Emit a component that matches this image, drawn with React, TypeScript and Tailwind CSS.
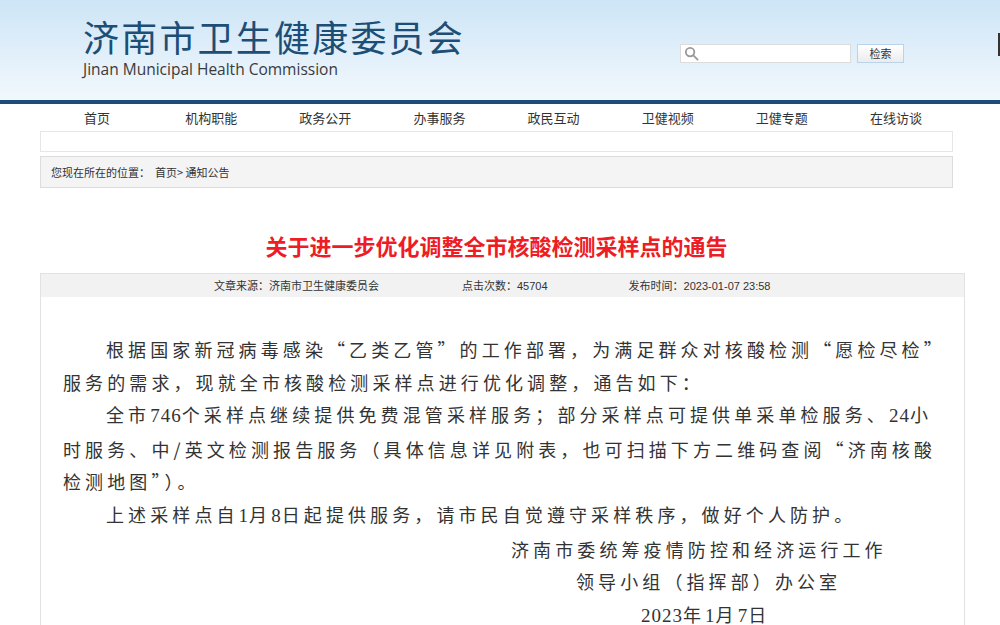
import React from "react";

const navItems = ["首页", "机构职能", "政务公开", "办事服务", "政民互动", "卫健视频", "卫健专题", "在线访谈"];

const cjk = { fontFamily: '"Noto Sans CJK SC", "Liberation Sans", sans-serif' };
const body = { fontFamily: '"Noto Sans CJK SC", "Liberation Serif", serif' };

function Num({ children }: { children: React.ReactNode }) {
  return (
    <span style={{ fontFamily: '"Liberation Serif", serif' }} className="text-[19px] tracking-[1px]">
      {children}
    </span>
  );
}

export default function App() {
  return (
    <div className="relative min-h-[625px] w-[1000px] overflow-hidden bg-white text-[#333]" style={cjk}>
      {/* header */}
      <div className="h-[104px] border-b-4 border-[#1b4d78] bg-gradient-to-b from-[#cde5f6] to-[#f2f8fd]">
        <div className="flex items-start justify-between pl-[83px] pr-[96px] pt-[16px]">
          <div>
            <div className="text-[36px] leading-[40px] tracking-[2.2px] text-[#1c4e76]">济南市卫生健康委员会</div>
            <div
              className="mt-[3px] text-[15.5px] leading-[20px] text-[#3a3a3a]"
              style={{ fontFamily: '"Open Sans", "Liberation Sans", sans-serif' }}
            >
              Jinan Municipal Health Commission
            </div>
          </div>
          <div className="mt-[28px] flex items-center gap-[6px]">
            <div className="flex h-[19px] w-[171px] items-center border border-[#dcdcdc] bg-white pl-[3px]">
              <svg width="15" height="15" viewBox="0 0 16 16" fill="none" stroke="#9a9a9a" strokeWidth="2">
                <circle cx="6.5" cy="6.5" r="4.5" />
                <path d="M10 10l4.5 4.5" strokeLinecap="round" />
              </svg>
            </div>
            <button className="h-[19px] w-[47px] border border-[#b8d3ea] bg-gradient-to-b from-white to-[#ececec] text-[11px] leading-[17px] text-[#333]">
              检索
            </button>
          </div>
        </div>
      </div>
      <div className="absolute right-0 top-[33px] h-[23px] w-[2px] bg-[#333]" />

      <div className="mx-[40px] w-[913px]">
        {/* nav */}
        <div className="grid h-[27px] grid-cols-8 items-center text-[13px] text-[#333]">
          {navItems.map((n) => (
            <div key={n} className="text-center">
              {n}
            </div>
          ))}
        </div>
        <div className="h-[21px] border border-[#e6e6e6]" />
        <div className="mt-[4px] flex h-[32px] items-center border border-[#dcdcdc] bg-[#f4f4f4] pl-[10px] text-[11px] text-[#333]">
          <span>您现在所在的位置：</span>
          <span className="ml-[5px]">首页&gt; 通知公告</span>
        </div>

        {/* title */}
        <h1
          className="mt-[42px] text-center text-[22px] font-bold leading-[30px] text-[#ee1c24]"
          style={body}
        >
          关于进一步优化调整全市核酸检测采样点的通告
        </h1>
      </div>

      {/* article */}
      <div className="ml-[40px] mt-[13px] w-[925px] border-x border-t border-[#e2e2e2]">
        <div className="flex h-[23px] items-center bg-[#f2f2f2] pl-[173px] text-[11px] text-[#333]">
          <span>文章来源：济南市卫生健康委员会</span>
          <span className="ml-[83px]">
            点击次数：<span style={{ fontFamily: '"Liberation Sans", sans-serif' }}>45704</span>
          </span>
          <span className="ml-[81px]">
            发布时间：<span style={{ fontFamily: '"Liberation Sans", sans-serif' }}>2023-01-07 23:58</span>
          </span>
        </div>
        <div
          className="whitespace-nowrap pb-[40px] pl-[22px] pt-[36px] text-[18px] leading-[32.6px] tracking-[4.1px] text-[#333]"
          style={body}
        >
          <p className="pl-[43px]">根据国家新冠病毒感染“乙类乙管”的工作部署，为满足群众对核酸检测“愿检尽检”</p>
          <p>服务的需求，现就全市核酸检测采样点进行优化调整，通告如下：</p>
          <p className="pl-[43px]">
            全市<Num>746</Num>个采样点继续提供免费混管采样服务；部分采样点可提供单采单检服务、<Num>24</Num>小
          </p>
          <p>时服务、中/英文检测报告服务（具体信息详见附表，也可扫描下方二维码查阅“济南核酸</p>
          <p>检测地图”）。</p>
          <p className="pl-[43px]">
            上述采样点自<Num>1</Num>月<Num>8</Num>日起提供服务，请市民自觉遵守采样秩序，做好个人防护。
          </p>
          <p className="pl-[448px]">济南市委统筹疫情防控和经济运行工作</p>
          <p className="pl-[513px]">领导小组（指挥部）办公室</p>
          <p className="pl-[578px]">
            <Num>2023</Num>年<Num>1</Num>月<Num>7</Num>日
          </p>
        </div>
      </div>
    </div>
  );
}
